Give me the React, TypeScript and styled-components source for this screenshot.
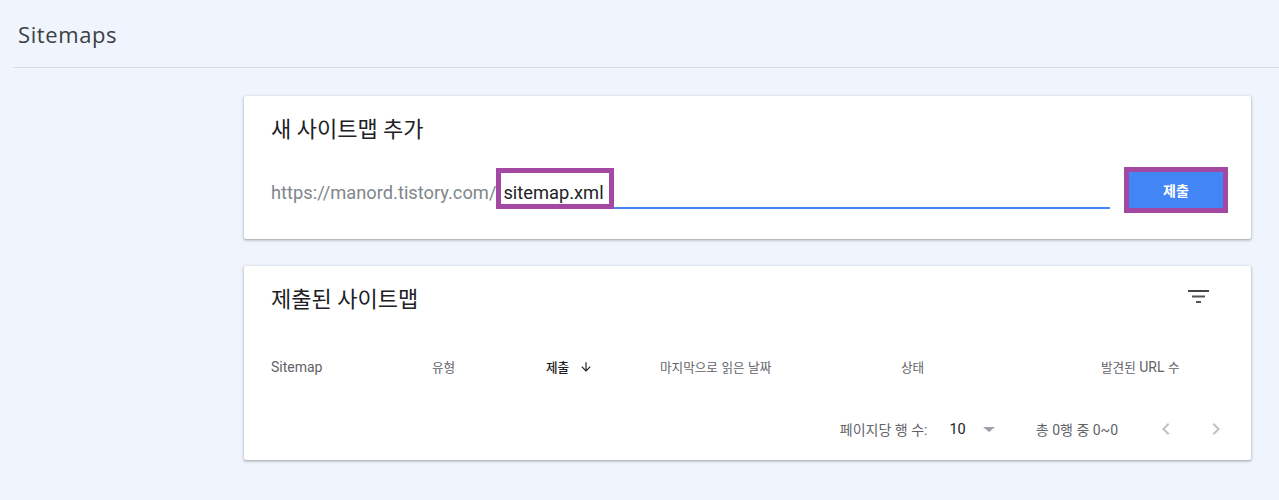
import React from "react";
import styled, { createGlobalStyle } from "styled-components";

const GlobalStyle = createGlobalStyle`
  html, body { margin: 0; padding: 0; }
  body {
    background: #f0f4fc;
    font-family: Roboto, "Noto Sans CJK KR", "Noto Sans", sans-serif;
    color: #202124;
  }
`;

const Page = styled.div`
  width: 1279px;
  height: 500px;
  overflow: hidden;
  background: #f0f4fc;
  padding-left: 13px;
  box-sizing: border-box;
`;

const Header = styled.header`
  height: 68px;
  border-bottom: 1px solid #dadce0;
  box-sizing: border-box;
  display: flex;
  align-items: center;
  padding-left: 5px;
`;

const PageTitle = styled.h1`
  margin: 0;
  font-family: "Open Sans", Roboto, sans-serif;
  font-weight: 400;
  font-size: 22px;
  letter-spacing: 0.6px;
  color: #3c4043;
`;

const Content = styled.main`
  display: flex;
  flex-direction: column;
  gap: 27px;
  padding: 28px 28px 0 231px;
`;

const Card = styled.section`
  background: #fff;
  border-radius: 2px;
  box-shadow: 0 1px 2px rgba(60, 64, 67, 0.3), 0 1px 3px 1px rgba(60, 64, 67, 0.15);
`;

const AddCard = styled(Card)`
  height: 143px;
  box-sizing: border-box;
  padding: 20px 23px 0 27px;
`;

const CardTitle = styled.h2`
  margin: 0;
  font-family: Roboto, "Noto Sans CJK KR", sans-serif;
  font-weight: 400;
  font-size: 22px;
  line-height: 28px;
  color: #202124;
`;

const InputRow = styled.div`
  display: flex;
  align-items: center;
  height: 46px;
  margin-top: 23px;
`;

const Prefix = styled.span`
  font-size: 18.3px;
  color: #80868b;
  padding-top: 4px;
  white-space: nowrap;
`;

const Field = styled.div`
  position: relative;
  flex: 1;
  margin: 0 14px 0 3px;
  height: 38px;
  display: flex;
  align-items: center;
  border-bottom: 2px solid #4285f4;
  box-sizing: border-box;
  padding: 6px 0 0 4px;
`;

const FieldText = styled.span`
  font-size: 18.3px;
  color: #202124;
`;

const Highlight = styled.span`
  position: absolute;
  left: -3px;
  top: -3px;
  width: 118px;
  height: 41px;
  border: 5px solid #a349a4;
  box-sizing: border-box;
  pointer-events: none;
`;

const ButtonFrame = styled.span`
  display: inline-flex;
  border: 5px solid #a349a4;
`;

const SubmitButton = styled.button`
  width: 94px;
  height: 36px;
  border: none;
  border-radius: 0;
  background: #4285f4;
  color: #fff;
  font-family: Roboto, "Noto Sans CJK KR", sans-serif;
  font-size: 14px;
  font-weight: 700;
  padding: 0;
`;

const ListCard = styled(Card)`
  height: 194px;
  box-sizing: border-box;
  padding-top: 20px;
  display: flex;
  flex-direction: column;
`;

const ListHead = styled.div`
  display: flex;
  align-items: center;
  justify-content: space-between;
  padding: 0 40px 0 27px;
  height: 28px;
`;

const IconBtn = styled.span`
  display: inline-flex;
  width: 24px;
  height: 24px;
  align-items: center;
  justify-content: center;
  margin-top: -6px;
`;

const TableHead = styled.div`
  display: grid;
  grid-template-columns: 161px 114px 114px 241px 200px 1fr;
  align-items: center;
  height: 56px;
  margin-top: 25px;
  padding-left: 27px;
`;

const Th = styled.div<{ $active?: boolean }>`
  font-size: 14px;
  line-height: 20px;
  color: ${(p) => (p.$active ? "#202124" : "#5f6368")};
  font-weight: ${(p) => (p.$active ? 500 : 400)};
  white-space: pre;
`;

const SortIcon = styled.span`
  display: inline-flex;
  vertical-align: -2px;
  margin-left: 10px;
`;

const Ko = styled.span<{ $size?: number }>`
  font-size: ${(p) => p.$size ?? 12.6}px;
  font-family: "Noto Sans CJK KR", sans-serif;
`;

const Footer = styled.div`
  display: flex;
  align-items: center;
  justify-content: flex-end;
  height: 65px;
  padding: 3px 11px 0 0;
  box-sizing: border-box;
  font-size: 14px;
  color: #5f6368;
`;

const RowsLabel = styled.span`
  white-space: pre;
`;

const RowsValue = styled.span`
  font-size: 14.5px;
  color: #202124;
  margin-left: 22px;
`;

const DropIcon = styled.span`
  display: inline-flex;
  margin-left: 16px;
`;

const RangeLabel = styled.span`
  margin-left: 40px;
  white-space: pre;
`;

const NavBtn = styled.span<{ $first?: boolean }>`
  display: inline-flex;
  width: 48px;
  height: 40px;
  align-items: center;
  justify-content: center;
  margin-left: ${(p) => (p.$first ? "24px" : "2px")};
`;

const FilterIcon = () => (
  <svg width="22" height="14" viewBox="0 0 22 14">
    <rect x="0" y="0" width="21" height="2" fill="#444" />
    <rect x="4" y="5.5" width="13" height="2" fill="#555" />
    <rect x="8" y="11" width="5" height="2" fill="#555" />
  </svg>
);

const ArrowDown = () => (
  <svg width="14" height="14" viewBox="0 0 24 24">
    <path d="M20 12l-1.41-1.41L13 16.17V4h-2v12.17l-5.58-5.59L4 12l8 8 8-8z" fill="#202124" />
  </svg>
);

const Caret = () => (
  <svg width="14" height="14" viewBox="5 5 14 14">
    <path d="M6 10l6 5 6-5z" fill="#9aa0a6" />
  </svg>
);

const ChevronLeft = () => (
  <svg width="24" height="24" viewBox="0 0 24 24">
    <path d="M15.41 7.41L14 6l-6 6 6 6 1.41-1.41L10.83 12z" fill="#bdc1c6" />
  </svg>
);

const ChevronRight = () => (
  <svg width="24" height="24" viewBox="0 0 24 24">
    <path d="M10 6L8.59 7.41 13.17 12l-4.58 4.59L10 18l6-6z" fill="#bdc1c6" />
  </svg>
);

export default function App() {
  const fk = 14;
  return (
    <>
      <GlobalStyle />
      <Page>
        <Header>
          <PageTitle>Sitemaps</PageTitle>
        </Header>
        <Content>
          <AddCard>
            <CardTitle>새 사이트맵 추가</CardTitle>
            <InputRow>
              <Prefix>https://manord.tistory.com/</Prefix>
              <Field>
                <FieldText>sitemap.xml</FieldText>
                <Highlight />
              </Field>
              <ButtonFrame>
                <SubmitButton>제출</SubmitButton>
              </ButtonFrame>
            </InputRow>
          </AddCard>
          <ListCard>
            <ListHead>
              <CardTitle>제출된 사이트맵</CardTitle>
              <IconBtn>
                <FilterIcon />
              </IconBtn>
            </ListHead>
            <TableHead>
              <Th>Sitemap</Th>
              <Th>
                <Ko>유형</Ko>
              </Th>
              <Th $active>
                <Ko>제출</Ko>
                <SortIcon>
                  <ArrowDown />
                </SortIcon>
              </Th>
              <Th>
                <Ko>마지막으로</Ko> <Ko>읽은</Ko> <Ko>날짜</Ko>
              </Th>
              <Th>
                <Ko>상태</Ko>
              </Th>
              <Th>
                <Ko>발견된</Ko> URL <Ko>수</Ko>
              </Th>
            </TableHead>
            <Footer>
              <RowsLabel>
                <Ko $size={fk}>페이지당</Ko> <Ko $size={fk}>행</Ko> <Ko $size={fk}>수</Ko>:
              </RowsLabel>
              <RowsValue>10</RowsValue>
              <DropIcon>
                <Caret />
              </DropIcon>
              <RangeLabel>
                <Ko $size={fk}>총</Ko> 0<Ko $size={fk}>행</Ko> <Ko $size={fk}>중</Ko> 0~0
              </RangeLabel>
              <NavBtn $first>
                <ChevronLeft />
              </NavBtn>
              <NavBtn>
                <ChevronRight />
              </NavBtn>
            </Footer>
          </ListCard>
        </Content>
      </Page>
    </>
  );
}
